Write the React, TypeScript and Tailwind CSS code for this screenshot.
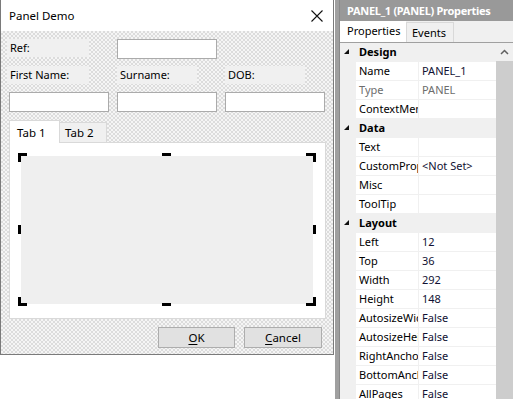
import React from "react";

const checker =
  "bg-[conic-gradient(#dcdcdc_25%,#f5f5f5_0_50%,#dcdcdc_0_75%,#f5f5f5_0)] bg-size-[4px_4px]";

function Handle({ className }: { className: string }) {
  return <div className={`absolute bg-black ${className}`} />;
}

function Label({ text, w }: { text: string; w: string }) {
  return (
    <div className={`h-[18px] ${w} bg-[#f0f0f0] pl-[3px] text-[11px] leading-[18px] text-black`}>
      {text}
    </div>
  );
}

function Input({ className = "" }: { className?: string }) {
  return <div className={`h-5 w-[100px] border border-[#ababab] bg-white ${className}`} />;
}

type Row = { name: string; value?: string; muted?: boolean } | { category: string };

const rows: Row[] = [
  { category: "Design" },
  { name: "Name", value: "PANEL_1" },
  { name: "Type", value: "PANEL", muted: true },
  { name: "ContextMenu" },
  { category: "Data" },
  { name: "Text" },
  { name: "CustomProperties", value: "<Not Set>" },
  { name: "Misc" },
  { name: "ToolTip" },
  { category: "Layout" },
  { name: "Left", value: "12" },
  { name: "Top", value: "36" },
  { name: "Width", value: "292" },
  { name: "Height", value: "148" },
  { name: "AutosizeWidth", value: "False" },
  { name: "AutosizeHeight", value: "False" },
  { name: "RightAnchor", value: "False" },
  { name: "BottomAnchor", value: "False" },
  { name: "AllPages", value: "False" },
];

function Dialog() {
  return (
    <div className="flex h-[355px] w-[334px] flex-col border-x border-b border-[#7a7a7a] bg-white">
      {/* Title */}
      <div className="flex h-[31px] items-center justify-between pl-2 pr-[10px]">
        <span className="text-[11.5px] text-black">Panel Demo</span>
        <svg width="12" height="12" viewBox="0 0 12 12" className="mt-[1px]">
          <path d="M0.5 0.5 L11.5 11.5 M11.5 0.5 L0.5 11.5" stroke="#111" strokeWidth="1.1" />
        </svg>
      </div>

      {/* Body */}
      <div className={`flex flex-1 flex-col ${checker}`}>
        <div className="mt-2 flex pl-[6px]">
          <Label text="Ref:" w="w-[82px]" />
          <Input className="ml-7" />
        </div>
        <div className="mt-[7px] flex gap-7 pl-[6px]">
          <Label text="First Name:" w="w-[82px]" />
          <Label text="Surname:" w="w-[80px]" />
          <Label text="DOB:" w="w-[80px]" />
        </div>
        <div className="mt-2 flex gap-2 pl-2">
          <Input />
          <Input />
          <Input />
        </div>

        {/* Tabs */}
        <div className="mt-2 ml-2 flex items-end">
          <div className="relative z-10 -mb-px h-[23px] w-[51px] border-x border-t border-[#d9d9d9] bg-white pl-[7px] pt-[3px] text-[11.5px] text-black">
            Tab 1
          </div>
          <div className="h-[20px] w-[47px] border-t border-r border-[#d9d9d9] bg-[#f0f0f0] pl-[5px] pt-[1px] text-[11.5px] text-black">
            Tab 2
          </div>
        </div>
        <div className="ml-2 h-[177px] w-[317px] border border-[#d9d9d9] bg-white pl-2 pt-[10px]">
          <div className="relative h-[153px] w-[298px] pt-[3px] pl-[3px] pr-[3px] pb-[2px]">
            <div className="h-[148px] w-[292px] bg-[#efefef]" />
            <Handle className="left-0 top-0 h-[3px] w-[9px]" />
            <Handle className="left-0 top-0 h-[9px] w-[3px]" />
            <Handle className="right-0 top-0 h-[3px] w-[10px]" />
            <Handle className="right-0 top-0 h-[9px] w-[3px]" />
            <Handle className="left-0 bottom-0 h-[3px] w-[9px]" />
            <Handle className="left-0 bottom-0 h-[9px] w-[3px]" />
            <Handle className="right-0 bottom-0 h-[3px] w-[10px]" />
            <Handle className="right-0 bottom-0 h-[9px] w-[3px]" />
            <Handle className="left-[144px] top-0 h-[3px] w-[9px]" />
            <Handle className="left-[144px] bottom-0 h-[3px] w-[9px]" />
            <Handle className="left-0 top-[72px] h-[9px] w-[3px]" />
            <Handle className="right-0 top-[72px] h-[9px] w-[3px]" />
          </div>
        </div>

        {/* Buttons */}
        <div className="mt-2 flex justify-end gap-[9px] pr-[11px]">
          <button className="h-[21px] w-[77px] border border-[#adadad] bg-[#e1e1e1] text-[11.5px] text-black">
            <span className="underline underline-offset-2">O</span>K
          </button>
          <button className="h-[21px] w-[78px] border border-[#adadad] bg-[#e1e1e1] text-[11.5px] text-black">
            <span className="underline underline-offset-2">C</span>ancel
          </button>
        </div>
      </div>
    </div>
  );
}

function Properties() {
  return (
    <div className="flex h-full flex-1 flex-col bg-[#f0f0f0]">
      <div className="h-[21px] whitespace-nowrap bg-[#999999] pl-[7px] text-[11px] font-bold leading-[21px] tracking-[-0.3px] text-white">
        PANEL_1 (PANEL) Properties
      </div>
      <div className="flex h-[22px] items-end border-b border-[#a0a0a0]">
        <div className="h-[21px] w-[66px] bg-white pl-[7px] text-[11px] leading-[20px] text-black">
          Properties
        </div>
        <div className="h-[20px] w-[48px] border-x border-t border-[#d9d9d9] pl-[5px] text-[11px] leading-[19px] text-black">
          Events
        </div>
      </div>
      <div className="flex flex-1 overflow-hidden">
        <div className="w-[156px]">
          {rows.map((r, i) =>
            "category" in r ? (
              <div key={i} className="flex h-[19px] items-center bg-[#f0f0f0] text-[11px] font-bold text-black">
                <svg width="16" height="19" viewBox="0 0 16 19">
                  <polygon points="9,6 9,11 4,11" fill="#111" />
                </svg>
                <span className="pl-[3px]">{r.category}</span>
              </div>
            ) : (
              <div key={i} className="flex h-[19px] pl-4 text-[11px]">
                <div
                  className={`w-[62px] overflow-hidden whitespace-nowrap border-b border-[#f0f0f0] bg-white pl-[3px] leading-[18px] ${
                    r.muted ? "text-[#6d6d6d]" : "text-black"
                  }`}
                >
                  {r.name}
                </div>
                <div
                  className={`ml-px flex-1 overflow-hidden whitespace-nowrap border-b border-[#f0f0f0] bg-white pl-[3px] leading-[18px] ${
                    r.muted ? "text-[#6d6d6d]" : "text-[#111133]"
                  }`}
                >
                  {r.value}
                </div>
              </div>
            )
          )}
        </div>
        <div className="flex w-[17px] flex-col">
          <div className="flex h-[18px] items-center justify-center bg-[#f0f0f0]">
            <svg width="9" height="6" viewBox="0 0 9 6">
              <path d="M1 5 L4.5 1.5 L8 5" stroke="#606060" strokeWidth="1.5" fill="none" />
            </svg>
          </div>
          <div className="flex-1 bg-[#cdcdcd]" />
        </div>
      </div>
    </div>
  );
}

export default function App() {
  return (
    <div className="flex h-[399px] w-[513px] overflow-hidden bg-white font-['Segoe_UI','Noto_Sans',sans-serif]">
      <div className="w-[335px] shrink-0">
        <Dialog />
      </div>
      <div className="w-[4px] shrink-0 bg-[#a0a0a0]" />
      <div className="w-px shrink-0 bg-[#8a8a8a]" />
      <Properties />
    </div>
  );
}
